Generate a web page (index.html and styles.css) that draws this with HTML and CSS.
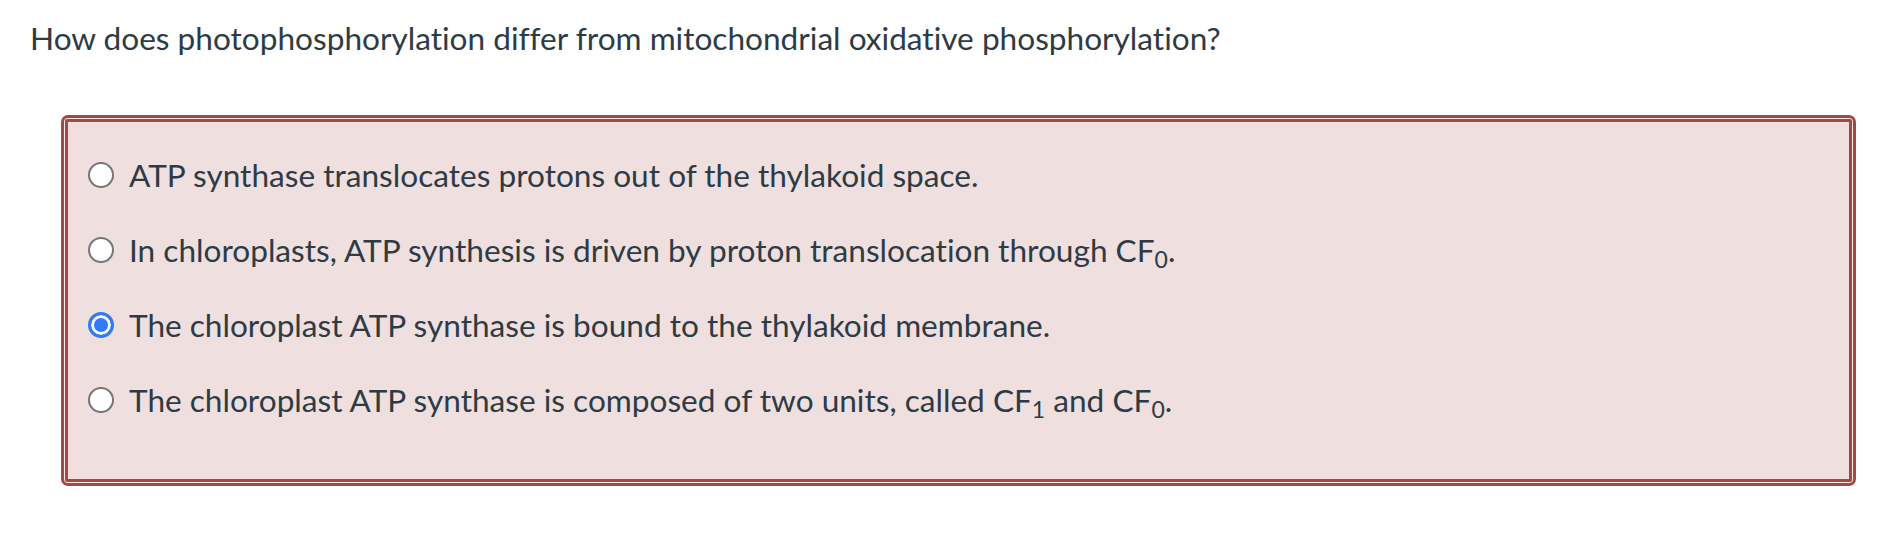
FILE: index.html
```html
<!DOCTYPE html>
<html lang="en">
<head>
    <meta charset="UTF-8">
    <meta name="viewport" content="width=device-width, initial-scale=1.0">
    <title>Quiz Question</title>
    <link rel="stylesheet" href="styles.css">
</head>
<body>
    <div class="question-text">How does photophosphorylation differ from mitochondrial oxidative phosphorylation?</div>

    <div class="answers-outer">
        <div class="answers">
            <label class="answer">
                <span class="radio"></span>
                <span class="answer-text">ATP synthase translocates protons out of the thylakoid space.</span>
            </label>
            <label class="answer">
                <span class="radio"></span>
                <span class="answer-text">In chloroplasts, ATP synthesis is driven by proton translocation through CF<sub>0</sub>.</span>
            </label>
            <label class="answer">
                <span class="radio checked"></span>
                <span class="answer-text">The chloroplast ATP synthase is bound to the thylakoid membrane.</span>
            </label>
            <label class="answer">
                <span class="radio"></span>
                <span class="answer-text">The chloroplast ATP synthase is composed of two units, called CF<sub>1</sub> and CF<sub>0</sub>.</span>
            </label>
        </div>
    </div>
</body>
</html>
```

FILE: styles.css
```css
* {
    margin: 0;
    padding: 0;
    box-sizing: border-box;
}
body {
    font-family: Lato, "Open Sans", sans-serif;
    font-size: 31.6px;
    line-height: 40px;
    font-variant-ligatures: none;
    color: #2d3b45;
    background: #fff;
    padding: 18px 28px 0 0;
}

.question-text {
    padding-left: 30px;
}

/* double red frame round the answer list */
.answers-outer {
    margin: 57px 0 0 61px;
    border: 3px solid #a34a47;
    border-radius: 7px;
    padding: 1px;
    background: #f5e9e9;
}
.answers {
    border: 3px solid #a34a47;
    border-radius: 2px;
    background-color: #efdfdf;
    padding: 33px 20px 59px;
    display: flex;
    flex-direction: column;
    gap: 35px;
}

.answer {
    display: flex;
    align-items: center;
    cursor: pointer;
}
.answer-text sub {
    font-size: 23px;
    line-height: 0;
    vertical-align: -6px;
}

.radio {
    width: 26px;
    height: 26px;
    flex-shrink: 0;
    margin-right: 15px;
    border: 2px solid #767676;
    border-radius: 50%;
    background: #fff;
}
.radio.checked {
    border: 3px solid #2f7cf6;
    background: #2f7cf6;
    box-shadow: inset 0 0 0 3px #fff;
}
```
